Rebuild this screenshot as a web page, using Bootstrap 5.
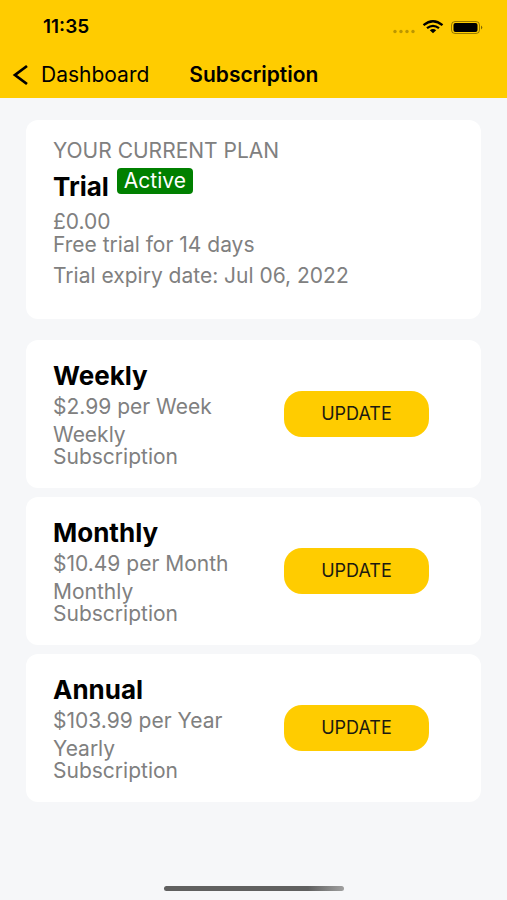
<!DOCTYPE html>
<html lang="en">
<head>
<meta charset="utf-8">
<meta name="viewport" content="width=device-width, initial-scale=1">
<title>Subscription</title>
<link href="https://cdn.jsdelivr.net/npm/bootstrap@5.3.0/dist/css/bootstrap.min.css" rel="stylesheet">
<style>
body{font-family:Inter,"Liberation Sans",sans-serif;background:#f6f7f9;color:#000}
.app-top{background:#fc0;height:98px}
.status-row{height:54px;padding:0 24px 0 43px;font-size:19px;line-height:22px}
.title-row{height:42px;padding:0 12px;font-size:21px;line-height:22px}
.title-row h1{font-size:21px;line-height:22px;margin-left:40px}
.back-link{gap:12px}
.plans{padding:22px 26px 0}
.plan{border:0;border-radius:12px;padding:20px 27px;margin-bottom:9px;background:#fff}
.plan-current{padding-bottom:32px;margin-bottom:21px}
.plan,.plan p{font-size:21px;line-height:22px;color:#808080}
.plan h2{font-size:26px;line-height:32px;color:#000}
.plan-name{margin:9px 0 7px}
.plan-state{background:#008000;font-size:21px;line-height:20px;padding:3px 7px;border-radius:4px;margin-top:-3px}
.plan .plan-terms{line-height:23px}
.plan-expiry{margin-top:9px}
.plan-info{flex:0 0 206px}
.plan-price{margin:4px 0 6px}
.btn-update{background:#fc0;border:0;border-radius:18px;width:145px;height:46px;font-size:18px;line-height:22px;color:#1c1a10}
.btn-update:hover{background:#f2c200}
.home-bar{width:180px;height:5px;border-radius:3px;margin-bottom:9px;background:linear-gradient(90deg,#606060 80%,#a0a0a0)}
</style>
<script defer src="https://cdn.jsdelivr.net/npm/bootstrap@5.3.0/dist/js/bootstrap.bundle.min.js"></script>
</head>
<body class="d-flex flex-column min-vh-100">
<header class="app-top">
  <div class="status-row d-flex align-items-center justify-content-between">
    <span class="fw-semibold">11:35</span>
    <svg width="92" height="18" viewBox="0 0 92 18" aria-hidden="true">
      <g fill="#000" opacity=".26"><circle cx="4" cy="13.500" r="1.700"/><circle cx="10" cy="13.500" r="1.700"/><circle cx="16" cy="13.500" r="1.700"/><circle cx="22" cy="13.500" r="1.700"/></g>
      <g fill="none" stroke="#000" stroke-width="2.300"><path d="M32.500 7.200Q42 -.800 51.500 7.200"/><path d="M36 10.200Q42 5.500 48 10.200"/></g>
      <path d="M38.800 12.200Q42 9.800 45.200 12.200L42 15.200z"/>
      <rect x="60.500" y="3.500" width="28" height="12" rx="3.500" fill="none" stroke="#000" stroke-opacity=".4"/>
      <rect x="62.500" y="5" width="24" height="9" rx="2"/>
      <path d="M90 7.500q2.500 2 0 4z" opacity=".5"/>
    </svg>
  </div>
  <nav class="title-row d-flex align-items-center" aria-label="Page">
    <a href="#" class="back-link d-flex align-items-center text-black text-decoration-none">
      <svg width="17" height="22" viewBox="0 0 17 22" aria-hidden="true"><path d="M15 2L3 11L15 20" fill="none" stroke="#000" stroke-width="2.800"/></svg>
      Dashboard
    </a>
    <h1 class="mb-0 fw-semibold">Subscription</h1>
  </nav>
</header>
<main class="plans">
  <section class="card plan plan-current">
    <p class="mb-0">YOUR CURRENT PLAN</p>
    <div class="plan-name d-flex align-items-start gap-2">
      <h2 class="mb-0 fw-bold">Trial</h2>
      <span class="plan-state text-white">Active</span>
    </div>
    <p class="plan-terms mb-0">£0.00</p>
    <p class="plan-terms mb-0">Free trial for 14 days</p>
    <p class="plan-expiry mb-0">Trial expiry date: Jul 06, 2022</p>
  </section>
  <section class="card plan flex-row align-items-center">
    <div class="plan-info">
      <h2 class="mb-0 fw-bold">Weekly</h2>
      <p class="plan-price">$2.99 per Week</p>
      <p class="mb-0 pe-5">Weekly Subscription</p>
    </div>
    <div class="flex-grow-1 text-center"><button type="button" class="btn btn-update">UPDATE</button></div>
  </section>
  <section class="card plan flex-row align-items-center">
    <div class="plan-info">
      <h2 class="mb-0 fw-bold">Monthly</h2>
      <p class="plan-price">$10.49 per Month</p>
      <p class="mb-0 pe-5">Monthly Subscription</p>
    </div>
    <div class="flex-grow-1 text-center"><button type="button" class="btn btn-update">UPDATE</button></div>
  </section>
  <section class="card plan flex-row align-items-center">
    <div class="plan-info">
      <h2 class="mb-0 fw-bold">Annual</h2>
      <p class="plan-price">$103.99 per Year</p>
      <p class="mb-0 pe-5">Yearly Subscription</p>
    </div>
    <div class="flex-grow-1 text-center"><button type="button" class="btn btn-update">UPDATE</button></div>
  </section>
</main>
<div class="home-bar mt-auto mx-auto"></div>
</body>
</html>
